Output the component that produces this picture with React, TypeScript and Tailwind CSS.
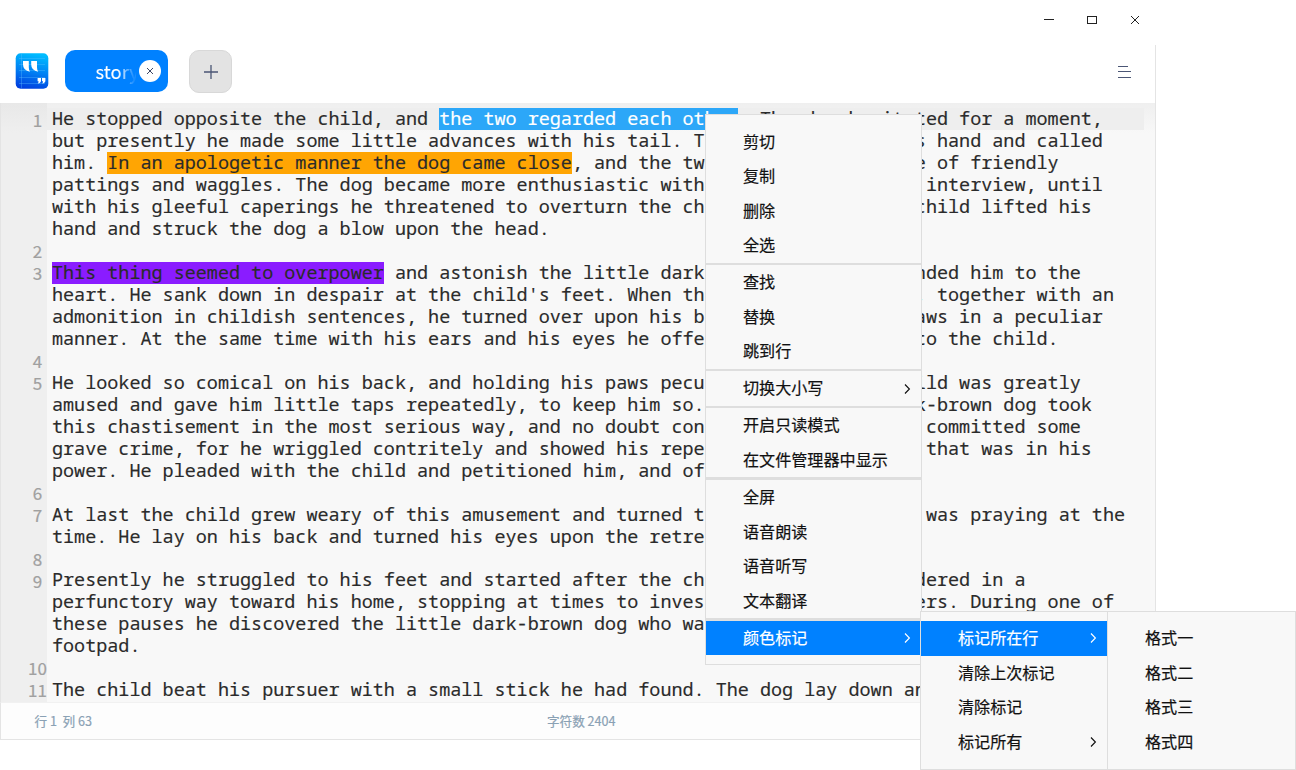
import React from "react";

type Line = { no?: number; text?: string; mark?: [number, number, string] };

const lines: Line[] = [
  { no: 1, text: "He stopped opposite the child, and the two regarded each other. The dog hesitated for a moment,", mark: [35, 62, "bg-[#2ca7f8] text-white"] },
  { text: "but presently he made some little advances with his tail. The child put out his hand and called" },
  { text: "him. In an apologetic manner the dog came close, and the two had an interchange of friendly", mark: [5, 47, "bg-[#ffa503]"] },
  { text: "pattings and waggles. The dog became more enthusiastic with each moment of the interview, until" },
  { text: "with his gleeful caperings he threatened to overturn the child. Whereupon the child lifted his" },
  { text: "hand and struck the dog a blow upon the head." },
  { no: 2 },
  { no: 3, text: "This thing seemed to overpower and astonish the little dark-brown dog, and wounded him to the", mark: [0, 30, "bg-[#8a1cff]"] },
  { text: "heart. He sank down in despair at the child's feet. When the blow was repeated, together with an" },
  { text: "admonition in childish sentences, he turned over upon his back, and held his paws in a peculiar" },
  { text: "manner. At the same time with his ears and his eyes he offered a small prayer to the child." },
  { no: 4 },
  { no: 5, text: "He looked so comical on his back, and holding his paws peculiarly, that the child was greatly" },
  { text: "amused and gave him little taps repeatedly, to keep him so. But the little dark-brown dog took" },
  { text: "this chastisement in the most serious way, and no doubt considered that he had committed some" },
  { text: "grave crime, for he wriggled contritely and showed his repentance in every way that was in his" },
  { text: "power. He pleaded with the child and petitioned him, and offered more prayers." },
  { no: 6 },
  { no: 7, text: "At last the child grew weary of this amusement and turned toward home. The dog was praying at the" },
  { text: "time. He lay on his back and turned his eyes upon the retreating form." },
  { no: 8 },
  { no: 9, text: "Presently he struggled to his feet and started after the child. The latter wandered in a" },
  { text: "perfunctory way toward his home, stopping at times to investigate various matters. During one of" },
  { text: "these pauses he discovered the little dark-brown dog who was following him with the air of a" },
  { text: "footpad." },
  { no: 10 },
  { no: 11, text: "The child beat his pursuer with a small stick he had found. The dog lay down and prayed until" },
];

function LineText({ line }: { line: Line }) {
  const text = line.text ?? "";
  if (!line.mark) return <>{text}</>;
  const [from, to, style] = line.mark;
  return (
    <>
      {text.slice(0, from)}
      <span className={`inline-block h-[22px] leading-[20px] align-top ${style}`}>{text.slice(from, to)}</span>
      {text.slice(to)}
    </>
  );
}

type Item = { label: string; sub?: boolean; active?: boolean };

function MenuItem({ label, sub, active }: Item) {
  return (
    <div className={`flex h-[34.6px] items-center justify-between pl-[37px] pr-[10px] ${active ? "bg-[#0081ff] text-white" : "text-[#111]"}`}>
      <span className="-mt-[2px] [-webkit-text-stroke:0.2px_currentColor]">{label}</span>
      {sub && (
        <svg width="7" height="12" viewBox="0 0 7 12" fill="none" stroke="currentColor" strokeWidth="1.15">
          <path d="M1 1.5 L5.4 6 L1 10.5" />
        </svg>
      )}
    </div>
  );
}

const groups: Item[][] = [
  [{ label: "剪切" }, { label: "复制" }, { label: "删除" }, { label: "全选" }],
  [{ label: "查找" }, { label: "替换" }, { label: "跳到行" }],
  [{ label: "切换大小写", sub: true }],
  [{ label: "开启只读模式" }, { label: "在文件管理器中显示" }],
  [{ label: "全屏" }, { label: "语音朗读" }, { label: "语音听写" }, { label: "文本翻译" }],
  [{ label: "颜色标记", sub: true, active: true }],
];

const markItems: Item[] = [
  { label: "标记所在行", sub: true, active: true },
  { label: "清除上次标记" },
  { label: "清除标记" },
  { label: "标记所有", sub: true },
];

const formats = ["格式一", "格式二", "格式三", "格式四"];

function Logo() {
  return (
    <svg width="34" height="36" viewBox="0 0 34 36">
      <defs>
        <linearGradient id="logo" x1="0.6" y1="0" x2="0.4" y2="1">
          <stop offset="0" stopColor="#00bdff" />
          <stop offset="0.5" stopColor="#0083f4" />
          <stop offset="1" stopColor="#0040df" />
        </linearGradient>
      </defs>
      <rect x="0.7" y="0.3" width="32.6" height="35.4" rx="5" fill="url(#logo)" />
      <path d="M6.5 0.5 V35.5 M4 5.5 H30 M4 11.5 H30 M4 17.5 H30 M4 24.5 H30 M4 30.5 H30" stroke="#5ec4ff" strokeOpacity="0.35" strokeWidth="1" />
      <path d="M8 8 H13.8 V14.5 Q13.8 16.8 15 18.8 Q8 17.5 8 11.5 Z M16.2 8 H22 V14.5 Q22 16.8 23.2 18.8 Q16.2 17.5 16.2 11.5 Z" fill="#fff" />
      <path d="M22.6 25 H26 V27.5 Q26 30 22.8 30.6 Q23.8 29 23.6 28.2 H22.6 Z M27 25 H30.4 V27.5 Q30.4 30 27.2 30.6 Q28.2 29 28 28.2 H27 Z" fill="#fff" />
    </svg>
  );
}

export default function App() {
  return (
    <div className="relative h-[770px] w-[1296px] overflow-hidden bg-white font-['Noto_Sans','Noto_Sans_CJK_SC',sans-serif]">
      <div className="flex h-[740px] w-[1156px] flex-col">
        <div className="flex h-[40px] items-center justify-end pr-[15px] text-[#222]">
          <svg width="98" height="12" viewBox="0 0 98 12" fill="none" stroke="currentColor" strokeWidth="1">
            <path d="M1 5.5 H11" />
            <rect x="44.5" y="2.5" width="9" height="7" />
            <path d="M88 2 L96 10 M96 2 L88 10" />
          </svg>
        </div>
        <div className="mt-[5px] flex h-[58px] items-center border-r border-[#e4e4e4] pb-[6px] pl-[15px] pr-[24px]">
          <Logo />
          <div className="ml-[16px] flex h-[42px] w-[103px] items-center justify-end rounded-[10px] bg-[#0081ff] pr-[7px]">
            <span className="mr-[3px] mt-[2px] w-[41px] whitespace-nowrap bg-gradient-to-r from-white from-55% to-white/10 to-95% bg-clip-text pl-[0.5px] font-['Noto_Sans_CJK_SC',sans-serif] text-[18.5px] text-transparent [-webkit-text-stroke:0.2px_transparent]">story</span>
            <span className="flex h-[22px] w-[22px] items-center justify-center rounded-full bg-white">
              <svg width="8" height="8" viewBox="0 0 8 8" stroke="#3d4765" strokeWidth="1">
                <path d="M1 1 L7 7 M7 1 L1 7" />
              </svg>
            </span>
          </div>
          <div className="ml-[21px] flex h-[43px] w-[43px] items-center justify-center rounded-[10px] border border-[#d8d8d8] bg-[#e3e3e3]">
            <svg width="15" height="15" viewBox="0 0 15 15" stroke="#4b5675" strokeWidth="1.3">
              <path d="M8 1 V15 M1 8 H15" />
            </svg>
          </div>
          <svg className="ml-auto" width="13" height="15" viewBox="0 0 13 15" stroke="#4b5675" strokeWidth="1.2">
            <path d="M0 2.5 H10 M0 7.5 H13 M0 13.5 H13" />
          </svg>
        </div>
        <div className="flex h-[599px] shrink-0 border-x border-[#e4e4e4] bg-[linear-gradient(to_bottom,#efefef,#f8f8f8_30px)]">
          <div className="w-[46px] bg-[linear-gradient(to_bottom,#e8e8e8,#efefef_30px)] pl-[27px] pt-[6.5px] text-center font-['Noto_Sans_CJK_SC',sans-serif] text-[17px] text-[#a0a0a0]">
            {lines.map((line, i) => (
              <div key={i} className="h-[21.96px] leading-[20px] [-webkit-text-stroke:0.2px_currentColor]">{line.no ?? ""}</div>
            ))}
          </div>
          <div className="w-[1097px] overflow-hidden pt-[5.4px] font-['Noto_Sans_Mono','DejaVu_Sans_Mono',monospace] text-[18.45px] text-[#2b2b2b]">
            {lines.map((line, i) => (
              <div key={i} className={`h-[21.96px] whitespace-pre pl-[5px] leading-[20px] [-webkit-text-stroke:0.15px_currentColor] ${i === 0 ? "bg-[#eeeeee]" : ""}`}>
                <LineText line={line} />
              </div>
            ))}
          </div>
        </div>
        <div className="flex h-[38px] shrink-0 items-center border border-[#e4e4e4] border-t-[#f1f1f1] bg-[#fdfdfd] font-['Noto_Sans_CJK_SC',sans-serif] text-[12.6px] text-[#8aa1b4] [-webkit-text-stroke:0.2px_currentColor]">
          <span className="w-[512px] whitespace-pre pl-[33.5px]">行 1  列 63</span>
          <span className="pl-[34px]">字符数 2404</span>
        </div>
      </div>

      <div className="absolute left-[705px] top-[114px] w-[217px] border border-[#dedede] bg-[#f8f8f8] pb-[9px] pt-[9.3px] text-[16.1px] font-['Noto_Sans_CJK_SC',sans-serif]">
        {groups.map((group, i) => (
          <div key={i}>
            {i > 0 && <div className="h-[2.4px] bg-[#dedede]" />}
            {group.map((item) => (
              <MenuItem key={item.label} {...item} />
            ))}
          </div>
        ))}
      </div>

      <div className="absolute left-[920px] top-[611px] flex h-[159px] w-[376px] border border-[#dedede] bg-[#f8f8f8] text-[16.1px] font-['Noto_Sans_CJK_SC',sans-serif]">
        <div className="w-[187px] border-r border-[#dedede] pt-[9px]">
          {markItems.map((item) => (
            <MenuItem key={item.label} {...item} />
          ))}
        </div>
        <div className="flex-1 pt-[9px]">
          {formats.map((label) => (
            <MenuItem key={label} label={label} />
          ))}
        </div>
      </div>
    </div>
  );
}
